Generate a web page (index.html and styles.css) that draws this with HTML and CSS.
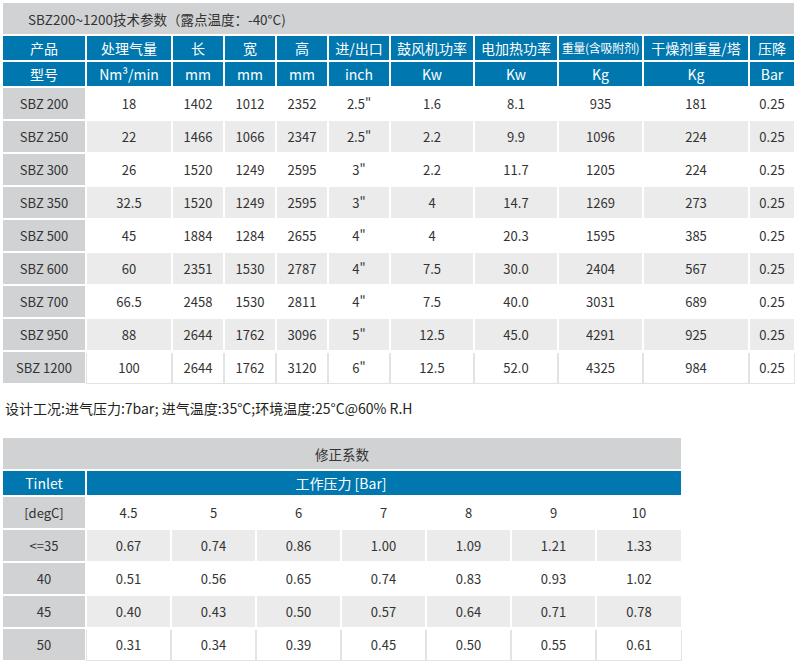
FILE: index.html
```html
<!DOCTYPE html>
<html lang="zh-CN">
<head>
<meta charset="utf-8">
<title>SBZ200~1200技术参数</title>
<link rel="stylesheet" href="styles.css">
</head>
<body>
<table class="spec">
  <colgroup>
    <col style="width:82px"><col style="width:84px"><col style="width:50px"><col style="width:50px"><col style="width:50px"><col style="width:60px"><col style="width:82px"><col style="width:82px"><col style="width:83px"><col style="width:104px"><col style="width:44px">
  </colgroup>
  <tr class="title-row"><td colspan="11" class="title">SBZ200~1200技术参数（露点温度：-40°C)</td></tr>
  <tr class="head-row">
    <th>产品</th><th>处理气量</th><th>长</th><th>宽</th><th>高</th><th>进/出口</th><th>鼓风机功率</th><th>电加热功率</th><th class="narrow">重量(含吸附剂)</th><th>干燥剂重量/塔</th><th>压降</th>
  </tr>
  <tr class="head-row">
    <th>型号</th><th>Nm³/min</th><th>mm</th><th>mm</th><th>mm</th><th>inch</th><th>Kw</th><th>Kw</th><th>Kg</th><th>Kg</th><th>Bar</th>
  </tr>
  <tr class="row"><td class="key">SBZ 200</td><td>18</td><td>1402</td><td>1012</td><td>2352</td><td>2.5"</td><td>1.6</td><td>8.1</td><td>935</td><td>181</td><td>0.25</td></tr>
  <tr class="row alt"><td class="key">SBZ 250</td><td>22</td><td>1466</td><td>1066</td><td>2347</td><td>2.5"</td><td>2.2</td><td>9.9</td><td>1096</td><td>224</td><td>0.25</td></tr>
  <tr class="row"><td class="key">SBZ 300</td><td>26</td><td>1520</td><td>1249</td><td>2595</td><td>3"</td><td>2.2</td><td>11.7</td><td>1205</td><td>224</td><td>0.25</td></tr>
  <tr class="row alt"><td class="key">SBZ 350</td><td>32.5</td><td>1520</td><td>1249</td><td>2595</td><td>3"</td><td>4</td><td>14.7</td><td>1269</td><td>273</td><td>0.25</td></tr>
  <tr class="row"><td class="key">SBZ 500</td><td>45</td><td>1884</td><td>1284</td><td>2655</td><td>4"</td><td>4</td><td>20.3</td><td>1595</td><td>385</td><td>0.25</td></tr>
  <tr class="row alt"><td class="key">SBZ 600</td><td>60</td><td>2351</td><td>1530</td><td>2787</td><td>4"</td><td>7.5</td><td>30.0</td><td>2404</td><td>567</td><td>0.25</td></tr>
  <tr class="row"><td class="key">SBZ 700</td><td>66.5</td><td>2458</td><td>1530</td><td>2811</td><td>4"</td><td>7.5</td><td>40.0</td><td>3031</td><td>689</td><td>0.25</td></tr>
  <tr class="row alt"><td class="key">SBZ 950</td><td>88</td><td>2644</td><td>1762</td><td>3096</td><td>5"</td><td>12.5</td><td>45.0</td><td>4291</td><td>925</td><td>0.25</td></tr>
  <tr class="row last"><td class="key">SBZ 1200</td><td>100</td><td>2644</td><td>1762</td><td>3120</td><td>6"</td><td>12.5</td><td>52.0</td><td>4325</td><td>984</td><td>0.25</td></tr>
</table>

<p class="note">设计工况:进气压力:7bar; 进气温度:35°C;环境温度:25°C@60% R.H</p>

<table class="corr">
  <colgroup>
    <col style="width:82px"><col style="width:83px"><col style="width:83px"><col style="width:83px"><col style="width:83px"><col style="width:83px"><col style="width:83px"><col style="width:84px">
  </colgroup>
  <tr class="title-row"><td colspan="8" class="title center">修正系数</td></tr>
  <tr class="head-row"><th>Tinlet</th><th colspan="7" class="pressure">工作压力 [Bar]</th></tr>
  <tr class="row"><td class="key">[degC]</td><td>4.5</td><td>5</td><td>6</td><td>7</td><td>8</td><td>9</td><td>10</td></tr>
  <tr class="row alt"><td class="key">&lt;=35</td><td>0.67</td><td>0.74</td><td>0.86</td><td>1.00</td><td>1.09</td><td>1.21</td><td>1.33</td></tr>
  <tr class="row"><td class="key">40</td><td>0.51</td><td>0.56</td><td>0.65</td><td>0.74</td><td>0.83</td><td>0.93</td><td>1.02</td></tr>
  <tr class="row alt"><td class="key">45</td><td>0.40</td><td>0.43</td><td>0.50</td><td>0.57</td><td>0.64</td><td>0.71</td><td>0.78</td></tr>
  <tr class="row last"><td class="key">50</td><td>0.31</td><td>0.34</td><td>0.39</td><td>0.45</td><td>0.50</td><td>0.55</td><td>0.61</td></tr>
</table>
</body>
</html>
```

FILE: styles.css
```css
html, body {
  margin: 0;
  padding: 0;
  background: #ffffff;
}

body {
  font-family: "Noto Sans CJK SC", "Noto Sans", sans-serif;
  color: #333333;
}

table {
  border-collapse: separate;
  border-spacing: 2px;
  table-layout: fixed;
  margin-left: 1px;
}

.spec {
  width: 795px;
  margin-top: 1px;
}

.corr {
  width: 680px;
  margin-top: 18px;
}

td, th {
  padding: 0;
  text-align: center;
  vertical-align: middle;
  font-weight: normal;
  white-space: nowrap;
  overflow: hidden;
}

.title-row td {
  height: 31px;
  background: #d1d2d4;
  font-size: 13.5px;
  color: #333333;
}

.title {
  text-align: left;
  padding-left: 25px;
}

.title.center {
  text-align: center;
  padding-left: 0;
}

.head-row th {
  height: 24px;
  background: #0077ae;
  color: #ffffff;
  font-size: 14px;
  line-height: 24px;
}

.head-row th.narrow {
  font-size: 12px;
  letter-spacing: -0.3px;
}

.head-row th.pressure {
  padding-right: 86px;
}

.row td {
  height: 31px;
  font-size: 13px;
  color: #333333;
  background: #ffffff;
}

.row.alt td {
  background: #ebebeb;
}

.row td.key {
  background: #d1d2d4;
}

.row.last td:not(.key) {
  box-shadow: 1px 1px 0 #e3e3e3, -1px 1px 0 #e3e3e3;
}

.note {
  margin: 13px 0 0 5px;
  font-size: 14px;
  line-height: 20px;
  color: #231f20;
}
```
